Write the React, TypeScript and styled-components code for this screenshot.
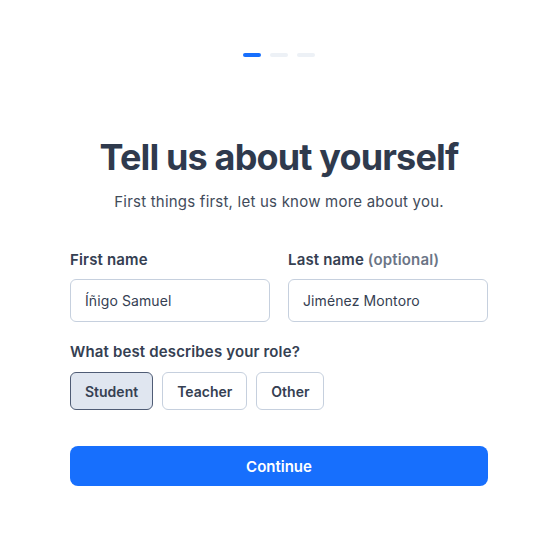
import React, { useState } from "react";
import styled, { createGlobalStyle } from "styled-components";

const Global = createGlobalStyle`
  html, body { margin: 0; padding: 0; background: #ffffff; }
  body { font-family: Inter, "Noto Sans", sans-serif; color: #334155; }
  * { box-sizing: border-box; }
`;

const Page = styled.div`
  width: 548px;
  min-height: 546px;
  display: flex;
  flex-direction: column;
  align-items: center;
  padding: 53px 0 0 10px;
`;

const Steps = styled.div`
  display: flex;
  gap: 9px;
`;

const Step = styled.div<{ $active?: boolean }>`
  width: 18px;
  height: 4px;
  border-radius: 2px;
  background: ${(p) => (p.$active ? "#176ffd" : "#edf1f6")};
`;

const Title = styled.h1`
  margin: 78px 0 0;
  font-size: 36px;
  line-height: 44px;
  font-weight: 700;
  letter-spacing: -0.85px;
  color: #2f3a4d;
`;

const Subtitle = styled.p`
  margin: 13px 0 0;
  font-size: 15px;
  line-height: 20px;
  letter-spacing: 0.22px;
  color: #424b5a;
`;

const Form = styled.form`
  width: 418px;
  margin-top: 38px;
  display: flex;
  flex-direction: column;
`;

const Row = styled.div`
  display: grid;
  grid-template-columns: minmax(0, 1fr) minmax(0, 1fr);
  gap: 18px;
`;

const Field = styled.label`
  display: flex;
  flex-direction: column;
  gap: 9px;
  min-width: 0;
`;

const Label = styled.span`
  font-size: 15px;
  line-height: 20px;
  font-weight: 600;
  letter-spacing: 0.15px;
  color: #354052;
`;

const Muted = styled.span`
  color: #6b7586;
`;

const Input = styled.input`
  width: 100%;
  min-width: 0;
  height: 43px;
  border: 1px solid #c6d0de;
  border-radius: 6px;
  padding: 0 14px;
  font-family: Inter, sans-serif;
  font-size: 14px;
  letter-spacing: 0.1px;
  color: #354052;
  background: #fff;
  outline: none;
`;

const RoleGroup = styled.div`
  margin-top: 20px;
  display: flex;
  flex-direction: column;
  gap: 10px;
`;

const Options = styled.div`
  display: flex;
  gap: 9px;
`;

const Option = styled.button<{ $selected?: boolean }>`
  height: 38px;
  padding: 0 14px;
  border-radius: 6px;
  border: 1px solid ${(p) => (p.$selected ? "#4f5c75" : "#c6d0de")};
  background: ${(p) => (p.$selected ? "#e0e6f0" : "#ffffff")};
  font-family: Inter, sans-serif;
  font-size: 14px;
  font-weight: 600;
  color: #354052;
  cursor: pointer;
`;

const Submit = styled.button`
  margin-top: 36px;
  height: 40px;
  border: none;
  border-radius: 8px;
  background: #176ffd;
  color: #ffffff;
  font-family: Inter, sans-serif;
  font-size: 15px;
  font-weight: 600;
  cursor: pointer;
`;

export default function App() {
  const [role, setRole] = useState("Student");
  return (
    <>
      <Global />
      <Page>
        <Steps>
          <Step $active />
          <Step />
          <Step />
        </Steps>
        <Title>Tell us about yourself</Title>
        <Subtitle>First things first, let us know more about you.</Subtitle>
        <Form onSubmit={(e) => e.preventDefault()}>
          <Row>
            <Field>
              <Label>First name</Label>
              <Input defaultValue="Íñigo Samuel" />
            </Field>
            <Field>
              <Label>
                Last name <Muted>(optional)</Muted>
              </Label>
              <Input defaultValue="Jiménez Montoro" />
            </Field>
          </Row>
          <RoleGroup>
            <Label>What best describes your role?</Label>
            <Options>
              {["Student", "Teacher", "Other"].map((r) => (
                <Option
                  key={r}
                  type="button"
                  $selected={role === r}
                  onClick={() => setRole(r)}
                >
                  {r}
                </Option>
              ))}
            </Options>
          </RoleGroup>
          <Submit type="submit">Continue</Submit>
        </Form>
      </Page>
    </>
  );
}
